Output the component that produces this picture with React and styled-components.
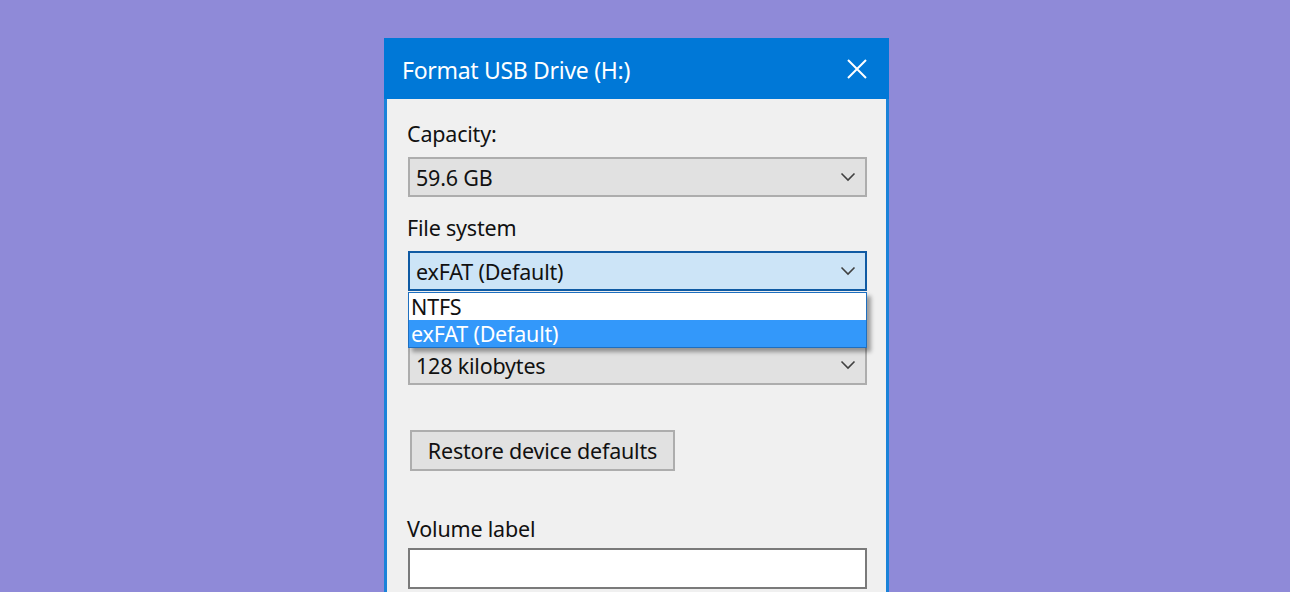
import styled, { createGlobalStyle } from 'styled-components'

const GlobalStyle = createGlobalStyle`
  html, body {
    margin: 0;
    padding: 0;
  }
  body {
    font-family: "Noto Sans", "Open Sans", "DejaVu Sans", sans-serif;
  }
`

const Chevron = () => (
  <svg width="16" height="10" viewBox="0 0 16 10">
    <path d="M1.5 1.5 L8 8 L14.5 1.5" fill="none" stroke="#404040" strokeWidth="1.6" />
  </svg>
)

const CloseIcon = () => (
  <svg width="20" height="20" viewBox="0 0 20 20">
    <path d="M1 1 L19 19 M19 1 L1 19" fill="none" stroke="#ffffff" strokeWidth="2" />
  </svg>
)

const App = () => {
  return (
    <Page>
      <GlobalStyle />
      <Dialog>
        <TitleBar>
          <Title>Format USB Drive (H:)</Title>
          <CloseButton><CloseIcon /></CloseButton>
        </TitleBar>
        <Body>
          <Label>Capacity:</Label>
          <Combo>
            <span>59.6 GB</span>
            <Chevron />
          </Combo>

          <Label $top={19}>File system</Label>
          <ComboWrap>
            <Combo $focused>
              <span>exFAT (Default)</span>
              <Chevron />
            </Combo>
            <DropList>
              <Option>NTFS</Option>
              <Option $selected>exFAT (Default)</Option>
            </DropList>
          </ComboWrap>

          {/* label row for the allocation size sits under the open list */}
          <Label $top={19} />
          <Combo>
            <span>128 kilobytes</span>
            <Chevron />
          </Combo>

          <Button>Restore device defaults</Button>

          <Label $top={46} $bottom={7}>Volume label</Label>
          <TextInput />
        </Body>
      </Dialog>
    </Page>
  )
}

export default App

const Page = styled.div`
  width: 1290px;
  height: 592px;
  overflow: hidden;
  background: #8f8ad8;
  display: flex;
  padding: 38px 0 0 384px;
  box-sizing: border-box;
`
const Dialog = styled.div`
  width: 505px;
  height: 600px;
  box-sizing: border-box;
  border: 3px solid #1a82d9;
  border-top: none;
  background: #f0f0f0;
  display: flex;
  flex-direction: column;
`
const TitleBar = styled.div`
  height: 61px;
  margin: 0 -3px;
  background: #0078d7;
  display: flex;
  align-items: center;
  justify-content: space-between;
  padding: 0 20px 0 18px;
  box-sizing: border-box;
`
const Title = styled.div`
  color: #ffffff;
  font-size: 23px;
  letter-spacing: -0.3px;
  padding-top: 2px;
`
const CloseButton = styled.div`
  display: flex;
  align-items: center;
  justify-content: center;
  width: 24px;
  height: 24px;
`
const Body = styled.div`
  display: flex;
  flex-direction: column;
  padding: 23px 19px 0 20px;
`
const Label = styled.div`
  font-size: 21.5px;
  line-height: 24px;
  height: 24px;
  color: #111;
  margin-top: ${p => p.$top || 0}px;
  margin-bottom: ${p => (p.$bottom != null ? p.$bottom : 11)}px;
  letter-spacing: -0.2px;
`
const ComboWrap = styled.div`
  position: relative;
`
const Combo = styled.div`
  height: 40px;
  box-sizing: border-box;
  margin-left: 1px;
  border: 2px solid ${p => (p.$focused ? '#0f5aa3' : '#adadad')};
  background: ${p => (p.$focused ? '#cce4f7' : '#e1e1e1')};
  display: flex;
  align-items: center;
  justify-content: space-between;
  padding: 0 9px 0 6px;
  font-size: 21.5px;
  color: #111;
  letter-spacing: -0.2px;
`
const DropList = styled.div`
  position: absolute;
  left: 1px;
  right: 0;
  top: 41px;
  background: #ffffff;
  border: 1px solid #1e6fc0;
  box-shadow: 4px 4px 4px rgba(0, 0, 0, 0.35);
  z-index: 2;
`
const Option = styled.div`
  height: 27px;
  line-height: 27px;
  padding-left: 2px;
  font-size: 21.5px;
  letter-spacing: -0.2px;
  background: ${p => (p.$selected ? '#3398fa' : '#ffffff')};
  color: ${p => (p.$selected ? '#ffffff' : '#111')};
`
const Button = styled.div`
  align-self: flex-start;
  margin-top: 45px;
  margin-left: 3px;
  width: 265px;
  height: 41px;
  box-sizing: border-box;
  border: 2px solid #adadad;
  background: #e1e1e1;
  display: flex;
  align-items: center;
  justify-content: center;
  font-size: 21.5px;
  color: #111;
  letter-spacing: -0.2px;
`
const TextInput = styled.div`
  height: 41px;
  margin-left: 1px;
  box-sizing: border-box;
  border: 2px solid #7a7a7a;
  background: #ffffff;
`
